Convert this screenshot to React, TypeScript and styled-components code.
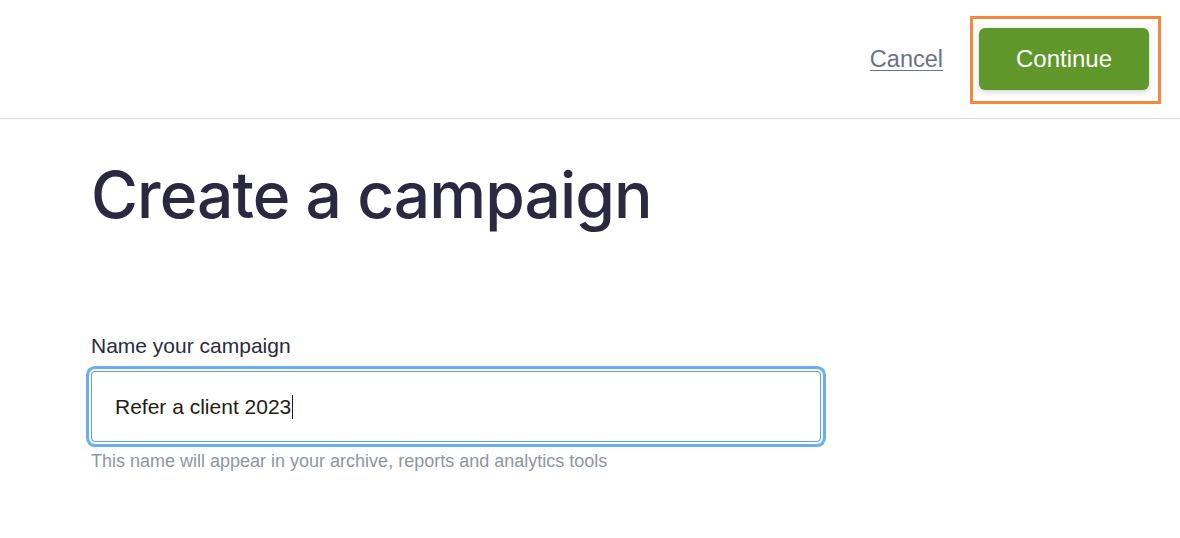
import React from "react";
import styled, { createGlobalStyle } from "styled-components";

const GlobalStyle = createGlobalStyle`
  body {
    margin: 0;
    background: #ffffff;
    font-family: "Liberation Sans", Arial, sans-serif;
  }
`;

const Page = styled.div`
  width: 1180px;
  min-height: 538px;
  background: #fff;
`;

const Header = styled.header`
  height: 118px;
  border-bottom: 1px solid #dcdfe6;
  display: flex;
  align-items: center;
  justify-content: flex-end;
  padding-right: 19px;
  gap: 27px;
`;

const CancelLink = styled.a`
  font-size: 23.5px;
  color: #6b7286;
  text-decoration: underline;
  text-underline-offset: 3px;
  text-decoration-thickness: 1px;
  cursor: pointer;
`;

const Highlight = styled.div`
  border: 3px solid #f5873e;
  padding: 9px 9px 11px 6px;
  margin-top: 1px;
`;

const PrimaryButton = styled.button`
  width: 170px;
  height: 62px;
  border: none;
  border-radius: 6px;
  background: #5f972a;
  color: #fff;
  font-family: "Liberation Sans", Arial, sans-serif;
  font-size: 24px;
  box-shadow: 0 2px 6px rgba(0, 0, 0, 0.18);
  cursor: pointer;
`;

const Main = styled.main`
  padding: 38px 0 0 91px;
`;

const Title = styled.h1`
  margin: 0;
  font-family: Inter, "Noto Sans", sans-serif;
  font-weight: 500;
  font-size: 64px;
  line-height: 76px;
  letter-spacing: -0.9px;
  color: #2a2941;
`;

const Field = styled.div`
  margin-top: 101px;
  width: 730px;
`;

const Label = styled.label`
  display: block;
  font-size: 21px;
  line-height: 24px;
  color: #2b2a3a;
  margin-bottom: 13px;
`;

const InputBox = styled.div`
  height: 71px;
  box-sizing: border-box;
  border: 1px solid #5d9de2;
  border-radius: 4px;
  box-shadow: 0 0 0 2px #fff, 0 0 0 5px #67aef5;
  display: flex;
  align-items: center;
  padding-left: 23px;
  font-size: 21px;
  color: #241c15;
`;

const Caret = styled.span`
  display: inline-block;
  width: 1px;
  height: 24px;
  background: #241c15;
  margin-left: 1px;
`;

const Hint = styled.p`
  margin: 9px 0 0;
  font-size: 18px;
  color: #8d96a3;
`;

export default function App() {
  return (
    <Page>
      <GlobalStyle />
      <Header>
        <CancelLink>Cancel</CancelLink>
        <Highlight>
          <PrimaryButton>Continue</PrimaryButton>
        </Highlight>
      </Header>
      <Main>
        <Title>Create a campaign</Title>
        <Field>
          <Label>Name your campaign</Label>
          <InputBox>
            Refer a client 2023
            <Caret />
          </InputBox>
          <Hint>This name will appear in your archive, reports and analytics tools</Hint>
        </Field>
      </Main>
    </Page>
  );
}
